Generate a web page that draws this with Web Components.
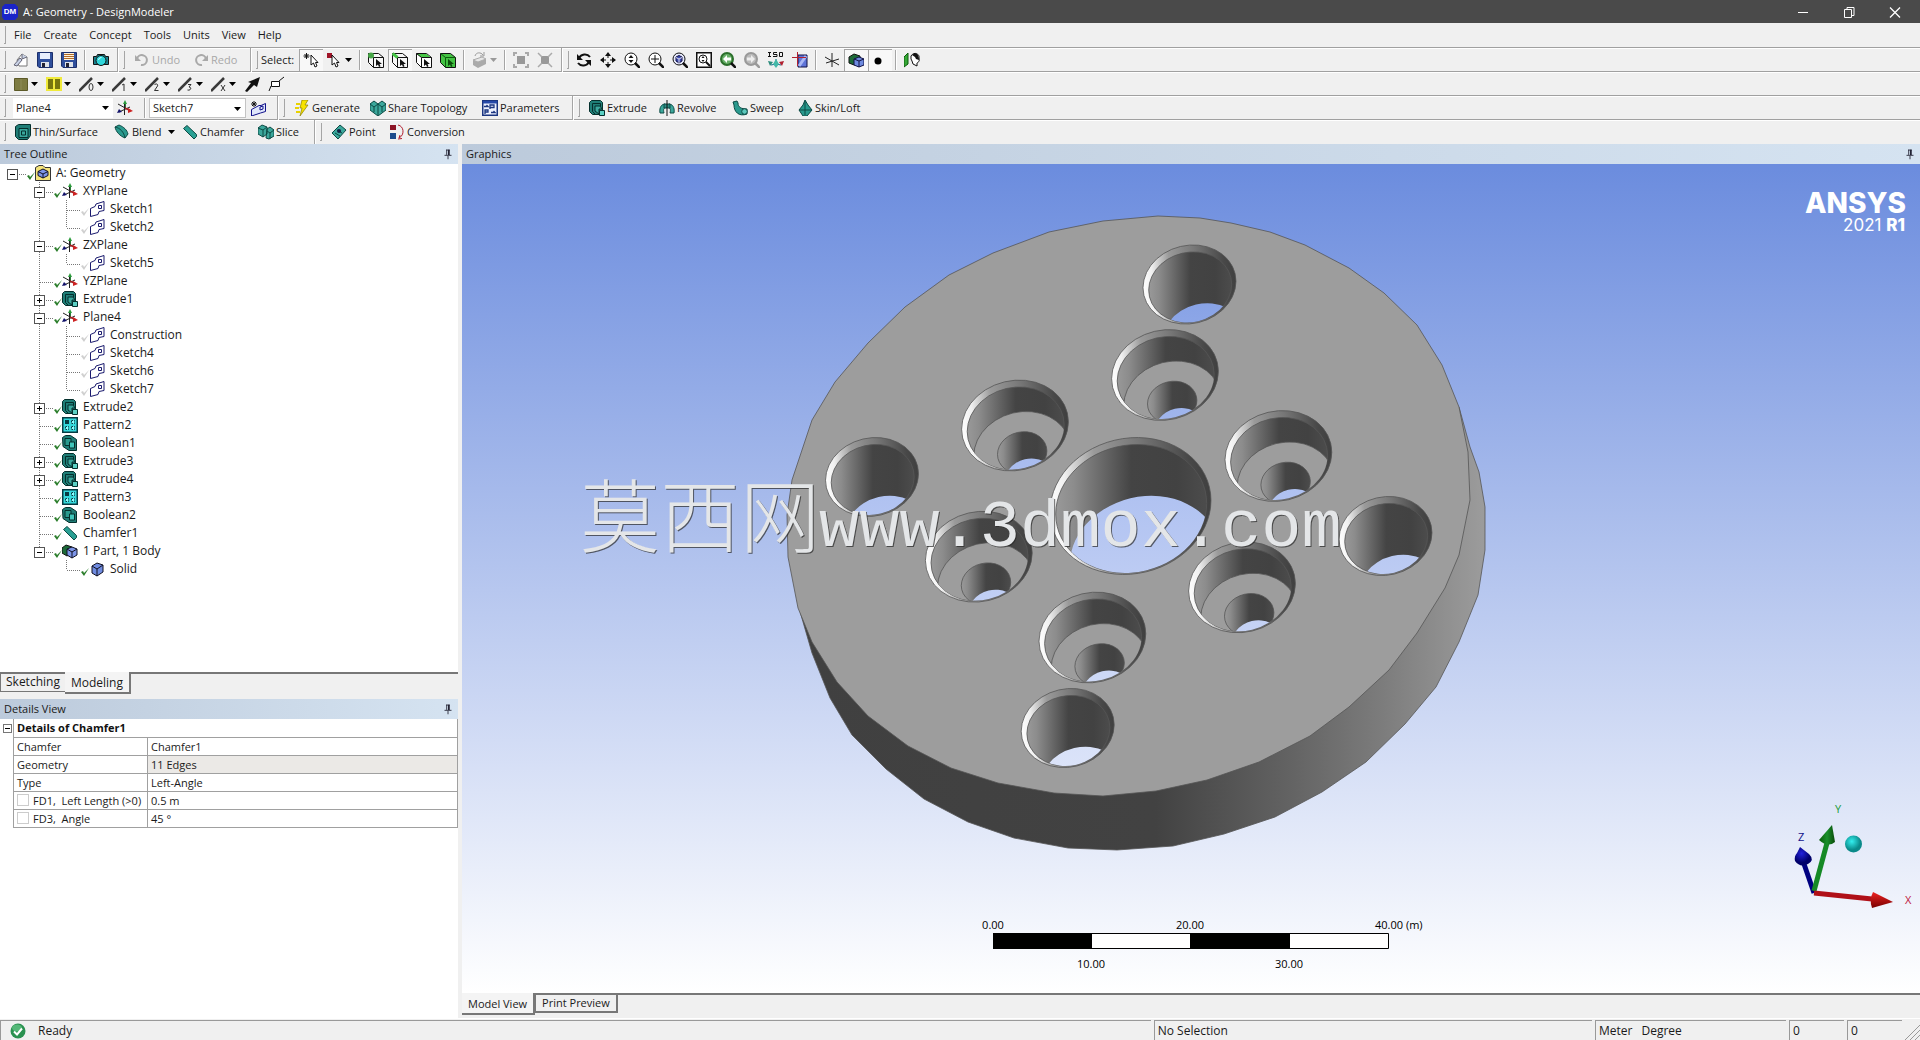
<!DOCTYPE html>
<html lang="en">
<head>
<meta charset="utf-8">
<title>A: Geometry - DesignModeler</title>
<style>
html,body{margin:0;height:100%}
body{font:12px/16px "Open Sans","Noto Sans",sans-serif;color:#1a1a1a;background:#f0f0f0;overflow:hidden}
</style>
</head>
<body>
<dm-app></dm-app>
<script>
const ICONS = {
  newdoc:'<path d="M4 8 9 2l5 3v9H6z" fill="#fff" stroke="#777"/><path d="M9 2v5l5-2M1 13l6-7 2 2-5 6z" fill="#c9d2e6" stroke="#667"/>',
  save:'<path d="M.5.5h15v15H2L.5 14z" fill="#2f4f9c" stroke="#1c2f6b"/><path d="M3 1h10v6H3z" fill="#e8eefc"/><path d="M4 10h8v5H4z" fill="#dfe3ea"/><path d="M5 11h3v4H5z" fill="#223"/>',
  saveas:'<path d="M.5.5h15v15H2L.5 14z" fill="#2f4f9c" stroke="#1c2f6b"/><path d="M3 1h10v7H3z" fill="#fff3dc"/><path d="M3 2.500h10M3 4.500h10M3 6.500h10" stroke="#b06a28"/><path d="M4 10h8v5H4z" fill="#dfe3ea"/><path d="M5 11h3v4H5z" fill="#223"/>',
  camera:'<path d="M.5 4.500h3l1-2h7l1 2h3v8H.5z" fill="#19808c" stroke="#111"/><circle cx="8" cy="8.500" r="5" fill="#2fd6da" stroke="#111"/><path d="M5.500 8a3 3 0 0 1 3-2.500" stroke="#dff" fill="none"/>',
  undo:'<path d="M3 7a5 5 0 1 1 4 6" fill="none" stroke="#a9a9a9" stroke-width="2"/><path d="M1 3v6h6z" fill="#a9a9a9"/>',
  redo:'<path d="M13 7a5 5 0 1 0-4 6" fill="none" stroke="#a9a9a9" stroke-width="2"/><path d="M15 3v6H9z" fill="#a9a9a9"/>',
  selnew:'<path d="M3.500 1v6M.5 4h6M1.500 2l4 4M5.500 2l-4 4" stroke="#111"/><path d="M8 3v10l2.500-2 1.500 4 2-1-1.500-3.500H15z" fill="#fff" stroke="#111"/>',
  selmode:'<path d="M0 1h5v5H0z" fill="#a01428"/><path d="M5 3v10l2.500-2 1.500 4 2-1-1.500-3.500H12z" fill="#fff" stroke="#111"/>',
  cubept:'<path d="M.5 1.500h10l5 4v10h-10l-5-5zM5.500 5.500h10M5.500 5.500v10M.5 1.500l5 4" fill="#f7f7f7" stroke="#111"/><circle cx="3" cy="3.500" r="3" fill="#46a546"/><path d="M8 7v7l2-1.500 1 2.500 1.500-.7-1-2.300H14z" fill="#111"/>',
  cubeedge:'<path d="M.5 1.500h10l5 4v10h-10l-5-5zM5.500 5.500h10M5.500 5.500v10" fill="#f7f7f7" stroke="#111"/><path d="M.5 1.500l5 4" stroke="#46c546" stroke-width="3"/><path d="M8 7v7l2-1.500 1 2.500 1.500-.7-1-2.300H14z" fill="#111"/>',
  cubeface:'<path d="M.5 1.500h10l5 4v10h-10l-5-5z" fill="#fff" stroke="#111"/><path d="M1 2h9.500l4.500 3.500H5.500z" fill="#46c546"/><path d="M5.500 5.500h10M5.500 5.500v10M.5 1.500l5 4" stroke="#111"/><path d="M8 7v7l2-1.500 1 2.500 1.500-.7-1-2.300H14z" fill="#111"/>',
  cubebody:'<path d="M.5 1.500h10l5 4v10h-10l-5-5z" fill="#42c242" stroke="#111"/><path d="M5.500 5.500h10M5.500 5.500v10M.5 1.500l5 4" stroke="#0b5c0b"/><path d="M8 7v7l2-1.500 1 2.500 1.500-.7-1-2.300H14z" fill="#0b4b0b"/>',
  extend:'<path d="M1 8l5 2v6L1 13zM6 10l8-3v5l-8 4z" fill="#aaa"/><path d="M1 8l5 2 8-3-4-2z" fill="#e6e6e6" stroke="#aaa"/><path d="M3 4c1-4 6-4 8-1M12 0v4H8" stroke="#999" fill="none"/>',
  expand:'<path d="M4 4h8v8H4z" fill="#999"/><path d="M1 4V1h3M12 1h3v3M15 12v3h-3M4 15H1v-3" fill="none" stroke="#aaa" stroke-width="2"/>',
  shrink:'<path d="M4 4h8v8H4z" fill="#999"/><path d="M1 1l4 4M15 1l-4 4M15 15l-4-4M1 15l4-4" stroke="#aaa" stroke-width="1.500"/>',
  rotate:'<path d="M3 6c2-4 8-5 11-1M13 10c-2 4-8 5-11 1" fill="none" stroke="#111" stroke-width="2"/><path d="M1 2v6h6zM15 14V8H9z" fill="#111"/>',
  pan:'<path d="M8 1v14M1 8h14" stroke="#111" stroke-dasharray="5 4"/><path d="M8 0l3 4H5zM8 16l3-4H5zM0 8l4-3v6zM16 8l-4-3v6z" fill="#111"/>',
  zoom:'<circle cx="7" cy="7" r="6" fill="#fff" stroke="#111"/><path d="M11 11l5 5" stroke="#111" stroke-width="2.500"/><path d="M7 3l2.500 3h-5zM7 11l2.500-3h-5z" fill="#111"/>',
  zoomin:'<circle cx="7" cy="7" r="6" fill="#fff" stroke="#111"/><path d="M11 11l5 5" stroke="#111" stroke-width="2.500"/><path d="M7 3v8M3 7h8" stroke="#111"/>',
  zoomfit:'<circle cx="7" cy="7" r="6" fill="#e6e9fc" stroke="#111"/><path d="M11 11l5 5" stroke="#111" stroke-width="2.500"/><path d="M7 3.500l3 1.500v4l-3 2-3-2V5z" fill="#3c4bb0" stroke="#114"/><path d="M4 5.500L7 7l3-1.500M7 7v4" stroke="#dde" fill="none"/>',
  zoombox:'<path d="M.75.75h14.500v14.500H.75z" fill="#fff" stroke="#111" stroke-width="1.500"/><circle cx="7" cy="7" r="4" fill="none" stroke="#111"/><path d="M10 10l4 4" stroke="#111" stroke-width="2"/><path d="M7 4l1.500 2h-3zM7 10l1.500-2h-3z" fill="#111"/>',
  zoomprev:'<circle cx="7" cy="7" r="6" fill="#68b068" stroke="#2b6f2b" stroke-width="2"/><path d="M11 11l5 5" stroke="#111" stroke-width="2.500"/><path d="M3 7l4-4v2.500h4v3H7V11z" fill="#fff"/>',
  zoomnext:'<circle cx="7" cy="7" r="6" fill="#bbb" stroke="#999" stroke-width="2"/><path d="M11 11l5 5" stroke="#999" stroke-width="2.500"/><path d="M11 7L7 3v2.500H3v3h4V11z" fill="#eee"/>',
  iso:'<path d="M1.500 0v5M0 .5h3M0 4.500h3M9 .5H5.500v2H9v2H5M11.500.5h3v4h-3z" fill="none" stroke="#111"/><path d="M8 7v5l-5 1M8 12l5 1" stroke="#168" fill="none"/><path d="M0 9l5 1-3 4z" fill="#2a8c7c"/><path d="M16 9l-5 1 3 4z" fill="#b02030"/><path d="M8 7l3 5-3 4-3-4z" fill="#45b8a8"/>',
  lookat:'<path d="M6 3h9v12H6z" fill="#5f74d8" stroke="#114"/><path d="M7 14l7-10" stroke="#a9b7f4" stroke-width="3"/><path d="M0 5.500h14M5.500 0v14" stroke="#b02030"/>',
  axis:'<path d="M8 1v14M1 5l14 8M2 11l13-4" stroke="#222"/>',
  shaded:'<path d="M1 5l5-3 6 2v7l-6 2-5-2z" fill="#1d6a38" stroke="#111"/><path d="M6 7l5-2 5 2v6l-5 2-5-2z" fill="#6f8be0" stroke="#114"/><path d="M6 7l5 2 5-2M11 9v6" stroke="#114" fill="none"/>',
  dot:'<circle cx="6" cy="9" r="3.500" fill="#000"/>',
  face:'<path d="M0 5l4-4v11l-4 3z" fill="#36a836" stroke="#0b5c0b"/><path d="M7 4c3-5 9-2 8 2 1 4-1 4-2 5v3l-4-2-1-3-1-2z" fill="#fff" stroke="#111"/><path d="M8 3c4-3 7-1 7 5l-3-1-1-2z" fill="#111"/>',
  sqolive:'<path d="M1.500 2.500h13v12h-13z" fill="#7d7b42" stroke="#5c5a28"/><path d="M8 3v11" stroke="#8e8c58"/>',
  sqyellow:'<path d="M0 1h16v14H0z" fill="#f0ea3c"/><path d="M2 3h5v10H2zM9 3h5v10H9z" fill="#77760f"/>',
  edge0:'e0',edge1:'e1',edge2:'e2',edge3:'e3',edgex:'ex',
  arrowb:'<path d="M16 1l-3 10-3-2-7 7-2-1 6-8-3-1z" fill="#111"/>',
  ptag:'<path d="M1 15l2-5M11 5l5-4" stroke="#111"/><path d="M3.500 5.500h8v5h-8z" fill="#fff" stroke="#111"/>',
  triad:'<path d="M8 8V2" stroke="#2a7d3a" stroke-width="2"/><path d="M7.500 3v12M1 4l9 5" stroke="#222"/><path d="M2 12l11-5" stroke="#222"/><path d="M8 0l2 4H6z" fill="#2a9a3a"/><path d="M8 8l5 2.500" stroke="#a22" stroke-width="1.500"/><path d="M11 8l5 3-5 2z" fill="#c22"/><path d="M0 13l2-4 3 3z" fill="#11116a"/>',
  newsketch:'<path d="M4 1v6M1 4h6M2 2l4 4M6 2l-4 4" stroke="#111"/><path d="M1.500 9.500 9 5.500h2l4.500-2v8l-5 1.500-9 3z" fill="#dfe6fb" stroke="#11118a"/><path d="M10 7l3-1v3l-3 1z" fill="none" stroke="#11118a"/>',
  bolt:'<path d="M8 0h6l-3 5h3l-8 11 2-8H6z" fill="#f7e300" stroke="#8c8000" stroke-width=".7"/><path d="M2 4h4M1 8h4M2 12h4" stroke="#e8d200" stroke-width="2"/>',
  share:'<path d="M0 4l4-3 4 3 4-3 4 3v6l-8 6-8-6z" fill="#3ba79b" stroke="#0c4a44"/><path d="M0 4l4 3 4-3 4 3 4-3M4 7v5M12 7v5M8 4v11" stroke="#0c4a44" fill="none"/>',
  params:'<path d="M.75.75h14.500v14.500H.75z" fill="#eef2ff" stroke="#1a3580" stroke-width="1.500"/><path d="M1 1h14v2.500H1z" fill="#2548a8"/><path d="M2 6.500h4l-1.500-1.500M8 9V5h4v2.500H8M3 14v-4h3v2H3M9 12.500h4l-1.500-1.500" stroke="#1a3580" fill="none" stroke-width="1.300"/>',
  extrude:'<path d="M.5 2.500l2-2h9l2 2v9l-2 3h-8l-3-3z" fill="#1f7d76" stroke="#052f2c"/><path d="M3.500 3.500h8v3M3.500 3.500v8l3 3" stroke="#052f2c"/><path d="M6 6h5l2 3h-3v5L6 11z" fill="#3aa99e" stroke="#052f2c"/><path d="M10.500 10.500h5v5h-5z" fill="#5cd0c4" stroke="#052f2c"/>',
  revolve:'<path d="M1 13c-1-6 2-9 5-9v4c-1 0-2 1-1 5zM15 13c1-6-2-9-5-9v4c1 0 2 1 1 5z" fill="#3ba79b" stroke="#0c4a44"/><path d="M5 4h6v4H5z" fill="#2a8c82" stroke="#0c4a44"/><path d="M8 0v16" stroke="#111"/>',
  sweep:'<path d="M1 2l4-1 1 2c0 4 3 6 9 6v5c-8 3-13-2-13-9z" fill="#2a9a8e" stroke="#0c4a44"/><circle cx="12.500" cy="11.500" r="2.800" fill="#5cc8bc" stroke="#0c4a44"/>',
  skin:'<path d="M8 0l3 5 4 5-5 6H6l-4-6 4-5z" fill="#2a9a8e" stroke="#0c4a44"/><path d="M8 1v9l-6 0M8 10l6 0M8 10v5" fill="none" stroke="#0c4a44"/>',
  thin:'<path d="M.5 2.500l3-2h12v11l-3 4h-9l-3-3z" fill="#1f7d76" stroke="#052f2c"/><path d="M4 4.500h9v9H4zM6.500 7h4v4h-4z" fill="#39a79c" stroke="#052f2c"/>',
  blend:'<path d="M1 3l4-2c5 2 8 5 9 9l-3 4C6 12 2 8 1 3z" fill="#2a9a8e" stroke="#0c4a44"/><path d="M1 3c5 1 9 5 10 11" stroke="#0c4a44" fill="none"/>',
  chamfer:'<path d="M1.500 4.500l3.500-3 9.500 9v2l-2.500 2.500z" fill="#2aa094" stroke="#0c4a44"/>',
  slice:'<path d="M0 4l4-3 5 2v7l-4 3-5-3zM9 5l3-2 4 3v6l-5 3-3-1z" fill="#3ba79b" stroke="#0c4a44"/><path d="M0 4l5 2 4-3M5 6v7M9 7l3 2 4-3M12 9v6" stroke="#0c4a44" fill="none"/>',
  point:'<path d="M1 9l8-8 6 5-8 9z" fill="#3ba79b" stroke="#0c4a44"/><path d="M4 9l5 3M6 6l5 3" stroke="#0c4a44"/><circle cx="8" cy="7" r="2" fill="#124"/>',
  convert:'<path d="M1 1h6v5H1z" fill="#8c1426"/><path d="M1 9h6v6H1z" fill="#1b4a8c"/><path d="M9 1c6 1 7 10 1 13M9 15l4-.500M10 14l1-3" stroke="#b02030" fill="none"/>',
  root:'<path d="M.5 2.500 4 .5h4l2 2h5.500v13H.5z" fill="#f3e27a" stroke="#333"/><path d="M8 4l5 2.500v4L8 13l-5-2.500v-4z" fill="#7d95e8" stroke="#112"/><path d="M3 6.500L8 9l5-2.500M8 9v4" stroke="#112" fill="none"/>',
  sketch:'<path d="M1.500 7.500 6 5.500 7 3l8-2.500v9l-5 1-1 3-7.500 2z" fill="#fff" stroke="#1a1a6e"/><path d="M9.500 4.500h3v3h-3z" fill="none" stroke="#1a1a6e"/>',
  pattern:'<path d="M.75.75h14.500v14.500H.75z" fill="#34d9dc" stroke="#073b42" stroke-width="1.500"/><path d="M3 3h4v4H3z" fill="#073b42"/><path d="M9.500 3.500h3v3h-3zM3.500 9.500h3v3h-3zM9.500 9.500h3v3h-3z" fill="#8ff" stroke="#073b42" stroke-dasharray="1.500 1"/>',
  bool:'<path d="M.5 2.500l3-2h5l6 4v11H7l-6-4z" fill="#1f7d76" stroke="#052f2c"/><path d="M3 3.500h6v7H3z" fill="#2a9a8e" stroke="#052f2c"/><path d="M7.500 7h5v6h-5z" fill="#3fc6ba" stroke="#052f2c"/>',
  part:'<path d="M0 5l4-3 6 2v6l-5 3-5-3z" fill="#1d6a38" stroke="#111"/><path d="M5 6l5-2 5 2v6l-5 3-5-3z" fill="#7d95e8" stroke="#112"/><path d="M5 6l5 3 5-3M10 9v6" stroke="#112" fill="none"/>',
  solid:'<path d="M3 5l5-3 6 2v7l-6 4-5-3z" fill="#6f8be0" stroke="#112"/><path d="M3 5l5 3 6-4M8 8v7" stroke="#112" fill="none"/>',
  pin:'<path d="M6.500 3v6M6 3.500h4M4 9.500h8M8 10v4" stroke="#223" fill="none"/><path d="M9 3v6" stroke="#223" stroke-width="2"/>',
  min:'<path d="M3 8.500h10" stroke="#fff"/>',
  restore:'<path d="M3.500 5.500h7v8h-7zM6 5V3.500h7v8h-2" fill="none" stroke="#fff"/>',
  close:'<path d="M3 3.500l10 10M13 3.500l-10 10" stroke="#fff" stroke-width="1.300"/>',
  ok:'<circle cx="8" cy="8" r="7.500" fill="#2a9150"/><ellipse cx="7" cy="5" rx="5" ry="3.500" fill="#55b878"/><path d="M4 8.500l3 3 5-6" stroke="#fff" stroke-width="2" fill="none"/>',
  logo:'<path d="M0 3l3-3h10l3 3v10l-3 3H2l-2-3z" fill="#1a24c8"/>'
};
const EDGE = {
  e0:'<ellipse cx="12" cy="11" rx="2" ry="3.500" fill="none" stroke="#333"/>',
  e1:'<path d="M10 9l2-1v7" fill="none" stroke="#333"/>',
  e2:'<path d="M9.500 9c1-2 4-1 3 1l-3 4.500h4" fill="none" stroke="#333"/>',
  e3:'<path d="M10 8.500h3l-2 2.500c3 0 2 4-1.500 3" fill="none" stroke="#333"/>',
  ex:'<path d="M10 9l4 6M14 9l-4 6" fill="none" stroke="#333"/>'
};
const svg = (name, size = 16) => {
  const body = EDGE[ICONS[name]] ? '<path d="M0 15L13 2" stroke="#3a3a3a" stroke-width="2.500"/>' + EDGE[ICONS[name]] : ICONS[name];
  return `<svg class="ic" width="${size}" height="${size}" viewBox="0 0 16 16" fill="none" aria-hidden="true">${body}</svg>`;
};
const BASE = `*{box-sizing:border-box}button,select,input{font:inherit;color:inherit;margin:0}button{border:0;background:none;padding:0}svg{display:block;flex:none}`;
const define = (name, css, html) => customElements.define(name, class extends HTMLElement {
  connectedCallback() {
    if (this.shadowRoot) return;
    const root = this.attachShadow({ mode: 'open' });
    root.innerHTML = `<style>${BASE}${css}</style>` + (typeof html === 'function' ? html(this) : html);
  }
});

/* Title bar */
define('title-bar', `
:host{display:flex;align-items:center;height:23px;padding-right:2px;background:#4a4a4a;color:#fff;font-size:11px}
.logo{position:relative;display:flex;margin:0 5px 0 2px;width:16px}
.logo span{position:absolute;inset:0;font:bold 8px/16px "Liberation Sans",sans-serif;text-align:center}
.grow{flex:1}
button{width:46px;height:23px;display:flex;align-items:center;justify-content:center}`,
`<div class="logo">${svg('logo')}<span>DM</span></div><span>A: Geometry - DesignModeler</span><div class="grow"></div>
<button aria-label="Minimize">${svg('min')}</button><button aria-label="Restore">${svg('restore')}</button><button aria-label="Close">${svg('close')}</button>`);

/* Toolbar pieces */
define('tool-grip', `:host{display:block;flex:none;width:9px;height:20px;padding-left:4px}i{display:block;width:2px;height:18px;margin-top:1px;border-right:1px solid #a5a5a5;border-bottom:1px solid #a5a5a5}`, '<i></i>');
define('tool-sep', `:host{display:block;flex:none;width:8px;height:20px;padding-left:3px}i{display:block;width:2px;height:20px;border-left:1px solid #a5a5a5;border-right:1px solid #fff}`, '<i></i>');
define('tool-end', `:host{display:flex;flex:none;width:15px;height:24px;align-items:center}i{width:2px;height:24px;margin-left:4px;border-left:1px solid #a5a5a5;border-right:1px solid #fff}b{width:2px;height:18px;margin-left:4px;border-right:1px solid #a5a5a5;border-bottom:1px solid #a5a5a5}`, '<i></i><b></b>');
define('tool-row', `:host{display:flex;align-items:center;height:24px;border-bottom:1px solid #a0a0a0;box-shadow:inset 0 1px #fff}:host([last]){border-bottom:0}`, '<slot></slot>');
define('tool-button', `
:host{display:block;flex:none;width:var(--w,24px);height:22px}
:host([arrow]){--w:33px}
button{width:100%;height:100%;display:flex;align-items:center;padding-left:4px;white-space:nowrap}
:host([label]) button{padding-left:6px}
.t{margin-left:2px}
.ar{margin-left:2px}
:host([arrow][label]) .ar{margin-left:6px}
button:disabled{color:#a8a8a8}
:host([pressed]) button{background:#f8f8f8;box-shadow:inset 1px 1px #a5a5a5}`,
h => { const l = h.getAttribute('label'), w = h.getAttribute('width');
  const dis = h.hasAttribute('disabled');
  return `${w ? `<style>:host{--w:${w}px!important}</style>` : ''}<button ${dis ? 'disabled' : ''} ${l ? '' : `aria-label="${h.getAttribute('icon')}"`}>${svg(h.getAttribute('icon'))}${l ? `<span class="t">${l}</span>` : ''}${h.hasAttribute('arrow') ? `<svg class="ar" width="7" height="4"><path d="M0 0h7l-3.500 4z" fill="${dis ? '#999' : '#000'}"/></svg>` : ''}</button>`; });
define('tool-select', `
:host{display:flex;flex:none;width:100px;height:20px;padding-right:3px;margin-left:4px;position:relative;background:#fff;font-size:11px}
:host([boxed]){margin-left:0;width:97px;padding-right:0;border:1px solid #c4c4c4}
select{appearance:none;border:0;background:none;width:100%;padding:0 14px 0 3px;outline:0}
svg{position:absolute;right:4px;top:8px}`,
h => `<select aria-label="${h.getAttribute('name')}"><option>${h.getAttribute('value')}</option></select><svg width="7" height="4"><path d="M0 0h7l-3.500 4z" fill="#000"/></svg>`);

define('menu-bar', `:host{display:flex;align-items:center;height:25px;border-bottom:1px solid #a0a0a0;font-size:11px}button{padding:0 6px}button:first-of-type{padding-left:5px}`,
`<tool-grip></tool-grip>` + ['File','Create','Concept','Tools','Units','View','Help'].map(t => `<button>${t}</button>`).join(''));

const b = (icon, extra = '') => `<tool-button icon="${icon}" ${extra}></tool-button>`;
const lb = (icon, label, width, extra = '') => `<tool-button icon="${icon}" label="${label}" width="${width}" ${extra}></tool-button>`;
const G = '<tool-grip></tool-grip>', S = '<tool-sep></tool-sep>', E = '<tool-end></tool-end>';
define('tool-area', `:host{display:block;background:#f0f0f0;font-size:11px}.lab{width:38px;white-space:nowrap}`, `
<tool-row>${G}${b('newdoc')}${b('save')}${b('saveas')}${S}${b('camera')}${E}${lb('undo','Undo',59,'disabled')}${lb('redo','Redo',59,'disabled')}${E}<span class="lab">Select:</span>${b('selnew','pressed')}${b('selmode','arrow')}${S}${b('cubept')}${b('cubeedge','pressed')}${b('cubeface')}${b('cubebody')}${S}${b('extend','arrow disabled')}${S}${b('expand','disabled')}${b('shrink','disabled')}${E}${['rotate','pan','zoom','zoomin','zoomfit','zoombox','zoomprev','zoomnext','iso','lookat'].map(i => b(i)).join('')}${S}${b('axis')}${b('shaded','pressed')}${b('dot','pressed')}${S}${b('face')}</tool-row>
<tool-row>${G}${['sqolive','sqyellow','edge0','edge1','edge2','edge3','edgex'].map(i => b(i,'arrow')).join('')}${b('arrowb')}${b('ptag')}</tool-row>
<tool-row>${G}<tool-select name="Plane" value="Plane4"></tool-select>${b('triad','width="28"')}${S}<tool-select boxed name="Sketch" value="Sketch7"></tool-select>${b('newsketch','width="27"')}${E}${lb('bolt','Generate',76)}${lb('share','Share Topology',112)}${lb('params','Parameters',92)}${E}${lb('extrude','Extrude',70)}${lb('revolve','Revolve',73)}${lb('sweep','Sweep',65)}${lb('skin','Skin/Loft',80)}</tool-row>
<tool-row last>${G}${lb('thin','Thin/Surface',99)}${lb('blend','Blend',68,'arrow')}${lb('chamfer','Chamfer',76)}${lb('slice','Slice',58)}${E}${lb('point','Point',58)}${lb('convert','Conversion',90)}</tool-row>`);

/* Docked panel with a caption strip */
define('dock-panel', `
:host{display:flex;flex-direction:column;min-height:0;min-width:0}
header{display:flex;align-items:center;justify-content:space-between;flex:none;height:20px;padding:0 3px 0 4px;background:linear-gradient(90deg,#bccadb,#d5e3f1);font-size:11px}
button{display:flex}
.body{flex:1;min-height:0;display:flex;flex-direction:column;background:#fff}`,
h => `<header><span>${h.getAttribute('caption')}</span><button aria-label="Pin">${svg('pin', 14)}</button></header><div class="body"><slot></slot></div>`);

/* Tree */
const check = on => `<svg width="8" height="16" viewBox="0 0 8 16"><path d="M0 11l3 4 5-8-5 5-1-2z" fill="${on ? '#2a7d2a' : '#cfcfcf'}"/></svg>`;
define('tree-item', `
:host{display:flex;height:18px;align-items:center}
.c{position:relative;flex:none;width:27px;height:18px}
.v::before,.half::before{content:"";position:absolute;left:12px;top:0;height:18px;width:1px;background:repeating-linear-gradient(#777 0 1px,transparent 1px 2px)}
.half::before{height:10px}
.h::after{content:"";position:absolute;left:13px;right:0;top:10px;height:1px;background:repeating-linear-gradient(90deg,#777 0 1px,transparent 1px 2px)}
button{position:absolute;z-index:1;left:7px;top:5px;width:11px;height:11px;background:#fff;border:1px solid #555}
.ic{margin-right:5px}`,
h => { const g = h.getAttribute('guides'), box = h.getAttribute('box');
  const cells = [...g].map(k => `<span class="c ${({v:'v',t:'v h',l:'half h',r:'h'})[k] || ''}">${'tlr'.includes(k) && box ? `<button aria-label="Toggle"><svg width="9" height="9"><path d="M2 4.500h5${box === '+' ? 'M4.500 2v5' : ''}" stroke="#000"/></svg></button>` : ''}</span>`).join('');
  return `${cells}${check(h.getAttribute('off') === null)}${svg(h.getAttribute('icon'))}<span><slot></slot></span>`; });
const TREE = [['r','root','A: Geometry','-'],[' t','triad','XYPlane','-'],[' vt','sketch','Sketch1'],[' vl','sketch','Sketch2'],[' t','triad','ZXPlane','-'],[' vl','sketch','Sketch5'],[' t','triad','YZPlane'],[' t','extrude','Extrude1','+'],[' t','triad','Plane4','-'],[' vt','sketch','Construction'],[' vt','sketch','Sketch4'],[' vt','sketch','Sketch6'],[' vl','sketch','Sketch7'],[' t','extrude','Extrude2','+'],[' t','pattern','Pattern2'],[' t','bool','Boolean1'],[' t','extrude','Extrude3','+'],[' t','extrude','Extrude4','+'],[' t','pattern','Pattern3'],[' t','bool','Boolean2'],[' t','chamfer','Chamfer1'],[' l','part','1 Part, 1 Body','-'],['  l','solid','Solid']];
define('tree-view', `:host{display:block;flex:1;overflow:hidden}`,
  TREE.map(([g, i, t, x]) => `<tree-item guides="${g}" icon="${i}" ${x ? `box="${x}"` : ''} ${i === 'sketch' ? 'off' : ''}>${t}</tree-item>`).join(''));

/* Bottom tabs: the active one is joined to the pane above it */
define('tab-strip', `
:host{display:flex;align-items:flex-start;flex:none;height:27px;background:#f0f0f0}
:host([boxed]){height:25px;font-size:11px}
button{height:20px;padding:0 5px 2px;border:solid #777;border-width:2px 0 1px 1px;white-space:nowrap}
button:first-child{padding-left:7px;border-left:0}
button.on{height:22px;padding:3px 6px 2px;border:solid #777;border-width:0 2px 2px 0;background:#f4f4f4}
button.on:first-child{padding-left:8px}
:host([boxed]) button:not(.on){border-right:2px solid #777;border-bottom-width:2px;padding:0 6px}
i{flex:1;height:2px;background:#777}`,
h => h.getAttribute('tabs').split('|').map((t, n) => `<button class="${n == h.getAttribute('active') ? 'on' : ''}">${t}</button>`).join('') + '<i></i>');

/* Property grid */
define('details-table', `
:host{display:block;flex:1;font-size:11px}
table{width:100%;border-collapse:collapse;table-layout:fixed}
td,th{height:18px;padding:0 0 0 3px;border:1px solid #a0a0a0;border-top-width:0;text-align:left;font-weight:normal;line-height:15px;white-space:nowrap;overflow:hidden}
th[colspan]{font-weight:bold;color:#111}
.g{width:13px;border-color:transparent #a0a0a0 transparent transparent;border-bottom:0;padding:0;vertical-align:top}
.n{width:134px}
.ro{background:#ebe9e6}
label{display:flex;align-items:center;white-space:pre}
input{appearance:none;width:12px;height:12px;border:1px solid #ccc;background:#fff;margin-right:4px}
button{display:block;width:9px;height:9px;margin:5px 0 0 2px;border:1px solid #777}`,
`<table><colgroup><col class="g"><col class="n"><col></colgroup>
<tr><td class="g" rowspan="6"><button aria-label="Collapse"><svg width="7" height="7"><path d="M1 3.500h5" stroke="#000"/></svg></button></td><th colspan="2">Details of Chamfer1</th></tr>
<tr><th>Chamfer</th><td>Chamfer1</td></tr>
<tr><th>Geometry</th><td class="ro">11 Edges</td></tr>
<tr><th>Type</th><td>Left-Angle</td></tr>
<tr><th><label><input type="checkbox">FD1,  Left Length (&gt;0)</label></th><td>0.5 m</td></tr>
<tr><th><label><input type="checkbox">FD3,  Angle</label></th><td>45 °</td></tr></table>`);

/* 3D viewport: every circle of the plate projects to one ellipse shape, R is half its width */
const TILT = 13.4, KA = 1.008, KB = .8405;
const ring = (x, y, R) => { const a = R * KA, c = R * KB, t = TILT * Math.PI / 180, dx = a * Math.cos(t), dy = -a * Math.sin(t);
  return `M${x + dx} ${y + dy}A${a} ${c} ${-TILT} 0 1 ${x - dx} ${y - dy}A${a} ${c} ${-TILT} 0 1 ${x + dx} ${y + dy}Z`; };
let uid = 0;
const clip = (d, inner) => { const id = 'c' + uid++; return `<clipPath id="${id}"><path d="${d}"/></clipPath><g clip-path="url(#${id})">${inner}</g>`; };
const DX = 14.6, DY = 54;
const line = 'stroke="#555" stroke-width=".8"';
const hole = (x, y, R) => { const inner = ring(x + .7, y + 2.7, R - 5);
  return `<path d="${ring(x, y, R)}" fill="url(#rim)" ${line}/><path d="${inner}" fill="url(#wall)" ${line}/>` + clip(inner, `<path d="${ring(x + DX, y + DY, R - 5)}" fill="url(#sky)"/>`); };
const bore = (x, y) => { const inner = ring(x + .7, y + 2.7, 48.5), small = ring(x + 7.2, y + 27.2, 24.7);
  return `<path d="${ring(x, y, 53.4)}" fill="url(#rim)" ${line}/><path d="${inner}" fill="url(#wall)" ${line}/>` +
    clip(inner, `<path d="${ring(x + 7.2, y + 27.2, 48.5)}" fill="#9d9d9d" ${line}/><path d="${small}" fill="url(#wall)" ${line}/>` + clip(small, `<path d="${ring(x + DX, y + DY, 24.7)}" fill="url(#sky)"/>`)); };
const FACE = '1158,216 1200,218 1231,223 1270,232 1305,245 1349,268 1384,293 1417,325 1442,365 1459,407 1468,452 1470,500 1459,555 1445,588 1417,633 1389,670 1349,707 1310,736 1259,762 1207,780 1156,791 1103,796 1054,793 998,783 951,768 908,746 868,716 837,682 812,642 798,608 788,557 787,515 792,480 812,420 835,382 868,343 905,307 949,275 993,253 1049,232 1103,221';
const SIDE = '1459,407 1470,447 1479,472 1485,507 1485,550 1478,595 1459,642 1436,687 1405,724 1366,762 1322,792 1275,817 1224,834 1173,846 1117,850 1068,848 1014,838 968,822 924,799 886,769 852,735 830,698 812,653 801,615 798,600 1100,500';
define('model-canvas', `
:host{display:block;flex:1;min-height:0;background:linear-gradient(#6b8cde,#fff)}
svg{width:100%;height:100%}
text{font-family:"Open Sans",sans-serif}
.s{font-size:11px}
.logo text{font-family:Inter,sans-serif}
.wm{filter:drop-shadow(1px 1px 0 rgba(40,40,40,.7))}
.wm text{font-family:"Liberation Mono","Noto Sans CJK SC",monospace;fill:#e4e6e8}
.wm .cjk{font-family:"Noto Sans CJK SC",sans-serif;font-weight:300}`,
`<svg viewBox="462 164 1458 829" preserveAspectRatio="xMidYMid meet" role="img" aria-label="Chamfered plate with holes">
<defs>
<linearGradient id="sky" gradientUnits="userSpaceOnUse" x1="0" y1="164" x2="0" y2="993"><stop stop-color="#6b8cde"/><stop offset=".4" stop-color="#b0c2f1"/><stop offset="1" stop-color="#fff"/></linearGradient>
<linearGradient id="wall"><stop stop-color="#999"/><stop offset=".12" stop-color="#8c8c8c"/><stop offset=".5" stop-color="#444"/><stop offset=".8" stop-color="#424242"/><stop offset="1" stop-color="#4c4c4c"/></linearGradient>
<linearGradient id="rim" x1="0" y1=".6" x2="1" y2=".5"><stop stop-color="#fff"/><stop offset=".12" stop-color="#f0f0f0"/><stop offset=".32" stop-color="#9a9a9a"/><stop offset=".6" stop-color="#777"/><stop offset=".9" stop-color="#484848"/><stop offset="1" stop-color="#404040"/></linearGradient>
<linearGradient id="side" gradientUnits="userSpaceOnUse" x1="798" y1="0" x2="1485" y2="0"><stop stop-color="#404040"/><stop offset=".52" stop-color="#424242"/><stop offset=".7" stop-color="#606060"/><stop offset=".85" stop-color="#7c7c7c"/><stop offset="1" stop-color="#9c9c9c"/></linearGradient>
<linearGradient id="gx" x1="0" y1="0" x2="0" y2="1"><stop stop-color="#e22"/><stop offset="1" stop-color="#700"/></linearGradient>
<linearGradient id="gy"><stop stop-color="#0a5a0a"/><stop offset=".5" stop-color="#19902a"/><stop offset="1" stop-color="#0a4a0a"/></linearGradient>
<radialGradient id="gb" cx=".4" cy=".35"><stop stop-color="#3ee"/><stop offset="1" stop-color="#0a8a8a"/></radialGradient>
<radialGradient id="gz" cx=".4" cy=".35"><stop stop-color="#22d"/><stop offset="1" stop-color="#00006a"/></radialGradient>
</defs>
<polygon points="${SIDE}" fill="url(#side)" stroke="#555" stroke-width=".8"/>
<polygon points="${FACE}" fill="#9d9d9d" stroke="#555" stroke-width=".8"/>
${[[1189.5,284.5],[872,477],[1385.5,536],[1067.7,728]].map(([x, y]) => hole(x, y, 46.5)).join('')}
${hole(1130.5, 506, 80.5)}
${[[1165,375],[1015,425.5],[1278.4,456],[978.8,556.7],[1242,587.3],[1092.4,637.5]].map(([x, y]) => bore(x, y)).join('')}
<g class="wm"><text class="cjk" x="580" y="546" font-size="80">莫西网</text><text x="819" y="546" font-size="67">www.3dmox.com</text></g>
<g class="logo" fill="#fff"><text x="1906" y="213" text-anchor="end" font-size="28" font-weight="800">ANSYS</text><text x="1905" y="231" text-anchor="end" font-size="17">2021 <tspan font-weight="800">R1</tspan></text></g>
<g fill="#000" class="s"><text x="993" y="929" text-anchor="middle">0.00</text><text x="1190" y="929" text-anchor="middle">20.00</text><text x="1375" y="929">40.00 (m)</text><text x="1091" y="968" text-anchor="middle">10.00</text><text x="1289" y="968" text-anchor="middle">30.00</text></g>
<path d="M993.500 933.500h395v15h-395z" fill="#fff" stroke="#000"/><path d="M993 933h99v16h-99zM1190 933h100v16h-100z" fill="#000"/>
<path d="M1814 893l-11-32" stroke="#000080" stroke-width="5"/><path d="M1814 891l13-48" stroke="#168a26" stroke-width="5"/><path d="M1814 893l58 6" stroke="#b01018" stroke-width="5"/>
<path d="M1832 825l3 17q-7 6-16-2z" fill="url(#gy)"/><path d="M1873 892l20 10-21 6q-3-8 1-16z" fill="url(#gx)"/>
<path d="M1800 847l9 7q6 6-1 10-8 4-13-3-1-5 2-8z" fill="url(#gz)"/><circle cx="1853.500" cy="844" r="8.500" fill="url(#gb)"/>
<g class="s"><text x="1835" y="813" fill="#1a9a3a">Y</text><text x="1798" y="841" fill="#11118a">Z</text><text x="1905" y="904" fill="#c02040">X</text></g>
</svg>`);

define('status-bar', `
:host{display:flex;height:22px;padding-top:1px;background:#f0f0f0;border-top:1px solid #fff}
div{display:flex;align-items:center;gap:12px;margin-right:3px;padding-left:3px;border:solid #999;border-width:1px 0 0 1px;white-space:nowrap}
.a{flex:1153;padding-left:9px}.b{flex:439}.c{flex:189;gap:9px}.d{flex:none;width:55px}
svg.grip{align-self:flex-end}`,
`<div class="a">${svg('ok')}<span>Ready</span></div><div class="b">No Selection</div><div class="c"><span>Meter</span><span>Degree</span></div><div class="d">0</div><div class="d">0</div>
<svg class="grip" width="15" height="16"><path d="M0 16L15 1M5 16L15 6M10 16l5-5" stroke="#999"/></svg>`);

define('dm-app', `
:host{display:grid;grid-template-rows:auto auto auto 1fr auto;height:100vh}
main{display:grid;grid-template-columns:458px 1fr;gap:4px;min-height:0}
.left{display:grid;grid-template-rows:555fr 319fr;min-height:0}`,
`<title-bar></title-bar><menu-bar></menu-bar><tool-area></tool-area>
<main><div class="left"><dock-panel caption="Tree Outline"><tree-view></tree-view><tab-strip tabs="Sketching|Modeling" active="1"></tab-strip></dock-panel>
<dock-panel caption="Details View"><details-table></details-table></dock-panel></div>
<dock-panel caption="Graphics"><model-canvas></model-canvas><tab-strip boxed tabs="Model View|Print Preview" active="0"></tab-strip></dock-panel></main>
<status-bar></status-bar>`);
</script>
</body>
</html>
